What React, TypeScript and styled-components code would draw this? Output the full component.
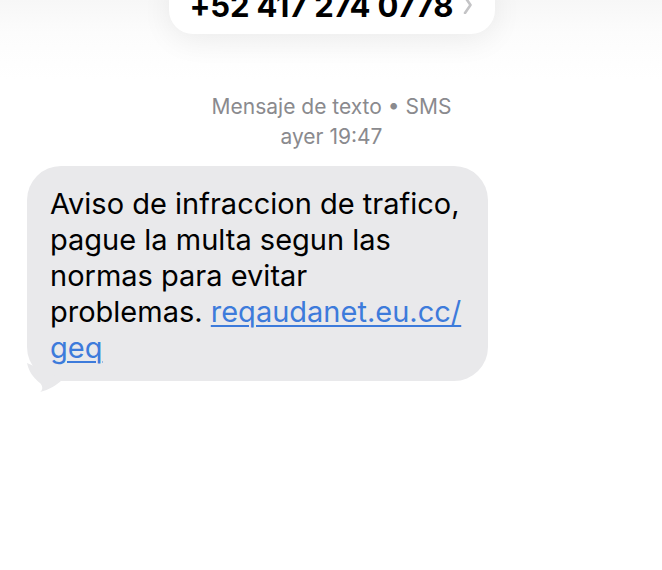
import styled, { createGlobalStyle } from "styled-components";

const GlobalStyle = createGlobalStyle`
  html, body {
    margin: 0;
    padding: 0;
    background: #ffffff;
  }
  body {
    font-family: Inter, "Liberation Sans", sans-serif;
    -webkit-font-smoothing: antialiased;
  }
`;

const Screen = styled.div`
  width: 662px;
  height: 570px;
  overflow: hidden;
  background: #ffffff;
  display: flex;
  flex-direction: column;
  align-items: center;
`;

const Header = styled.div`
  width: 100%;
  height: 80px;
  display: flex;
  justify-content: center;
  align-items: flex-start;
  background: linear-gradient(to bottom, #f7f7f7 0%, #fcfcfc 40%, #ffffff 100%);
`;

const ContactPill = styled.div`
  margin-top: -24px;
  margin-left: 1px;
  width: 326px;
  height: 58px;
  box-sizing: border-box;
  padding: 0 0 0 21px;
  border-radius: 24px;
  background: #ffffff;
  box-shadow: 0 6px 30px rgba(0, 0, 0, 0.07);
  display: flex;
  align-items: center;
  gap: 10px;
`;

const Number = styled.span`
  font-size: 31px;
  font-weight: 700;
  letter-spacing: -0.2px;
  color: #000000;
  line-height: 1;
`;

const Meta = styled.div`
  margin-top: 12px;
  margin-left: 1px;
  display: flex;
  flex-direction: column;
  align-items: center;
  font-size: 21px;
  line-height: 30px;
  color: #8a8a8e;
`;

const Thread = styled.div`
  width: 100%;
  box-sizing: border-box;
  padding: 14px 0 0 27px;
`;

const Bubble = styled.div`
  position: relative;
  width: 461px;
  box-sizing: border-box;
  padding: 20px 16px 15px 23px;
  border-radius: 34px;
  background: #e9e9eb;
  font-size: 29px;
  line-height: 36px;
  color: #000000;
`;

const Tail = styled.svg`
  position: absolute;
  left: 0;
  bottom: -12px;
`;

const Link = styled.a`
  color: #3d7bdb;
  text-decoration: underline;
  text-decoration-thickness: 2px;
  text-underline-offset: 3px;
`;

export default function App() {
  return (
    <>
      <GlobalStyle />
      <Screen>
        <Header>
          <ContactPill>
            <Number>+52 417 274 0778</Number>
            <svg width="10" height="18" viewBox="0 0 10 18">
              <path
                d="M2 1 L7.5 9 L2 17"
                fill="none"
                stroke="#c4c4c6"
                strokeWidth="2.6"
                strokeLinecap="round"
                strokeLinejoin="round"
              />
            </svg>
          </ContactPill>
        </Header>
        <Meta>
          <span>Mensaje de texto • SMS</span>
          <span>ayer 19:47</span>
        </Meta>
        <Thread>
          <Bubble>
            Aviso de infraccion de trafico,
            <br />
            pague la multa segun las
            <br />
            normas para evitar
            <br />
            problemas. <Link href="#">reqaudanet.eu.cc/</Link>
            <br />
            <Link href="#">geq</Link>
            <Tail width="40" height="30" viewBox="0 0 40 30">
              <path d="M0 0 C2 10 8 16 13 20 C16 23 16 27 13 29 C22 27 30 22 36 16 Z" fill="#e9e9eb" />
            </Tail>
          </Bubble>
        </Thread>
      </Screen>
    </>
  );
}
